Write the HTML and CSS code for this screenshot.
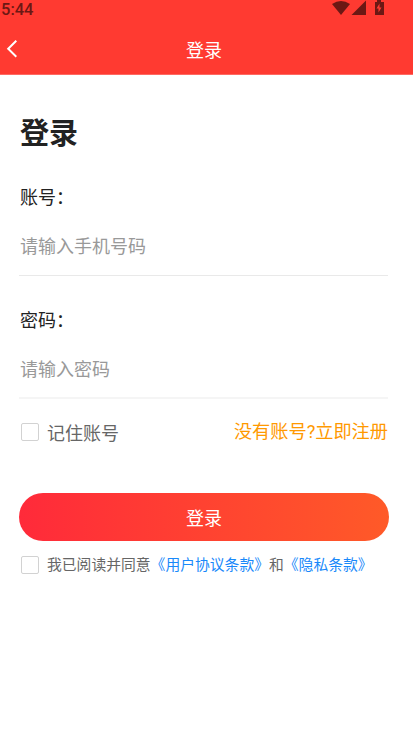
FILE: index.html
```
<!DOCTYPE html>
<html lang="zh-CN">
<head>
<meta charset="utf-8">
<title>登录</title>
<link rel="stylesheet" href="styles.css">
</head>
<body>
<header class="top">
  <div class="status">
    <span class="time">5:44</span>
    <svg class="signals" width="54" height="16" viewBox="0 0 54 16" fill="#6c1814">
      <path d="M0 4Q9-2 18 4L9 15Z"/>
      <path d="M19.5 15L34 .5V15Z"/>
      <path fill-rule="evenodd" d="M45 0h4v2h3v13h-9V2h2zM47.500 3.500l-3 5h2v4l3-5h-2z"/>
    </svg>
  </div>
  <nav class="nav">
    <svg class="back" width="12" height="18" viewBox="0 0 12 18" fill="none" stroke="#fff" stroke-width="2"><path d="M10.300 .7L2.200 8.700L10.300 16.700"/></svg>
    <h1 class="nav-title">登录</h1>
  </nav>
</header>
<main class="page">
  <h2 class="heading">登录</h2>
  <label class="label" for="account">账号：</label>
  <input class="field" id="account" type="text" placeholder="请输入手机号码">
  <label class="label" for="password">密码：</label>
  <input class="field password" id="password" type="password" placeholder="请输入密码">
  <div class="options">
    <label class="check"><input class="box" type="checkbox"><span class="check-text">记住账号</span></label>
    <a class="register">没有账号?立即注册</a>
  </div>
  <button class="submit" type="button">登录</button>
  <label class="check terms"><input class="box" type="checkbox"><span>我已阅读并同意<a class="link">《用户协议条款》</a>和<a class="link">《隐私条款》</a></span></label>
</main>
</body>
</html>
```
FILE: styles.css
```
* { box-sizing: border-box; }
body { margin: 0; background: #fff; color: #222; font-family: Roboto, "Noto Sans CJK SC", sans-serif; font-size: 18px; }
.top { height: 75px; background: #ff3a31; border-bottom: 1px solid #ff6962; }
.status { display: flex; justify-content: space-between; height: 24px; padding: 0 27px 0 1px; }
.time { color: #6c1814; font-size: 16.5px; font-weight: 500; line-height: 19px; }
.signals { display: block; }
.nav { display: grid; grid-template-columns: 40px 1fr 40px; align-items: center; height: 50px; padding-right: 5px; }
.back { margin-left: 6px; }
.nav-title { margin: 0; padding-top: 3px; color: #fff; font-size: 18px; font-weight: 400; line-height: 26px; text-align: center; }
.page { padding: 38px 24px 0 19px; }
.heading { margin: 0 0 0 1px; font-size: 29px; font-weight: 700; line-height: 42px; }
.label { display: block; margin: 30px 0 0 1px; line-height: 26px; }
.field { display: block; width: calc(100% - 1px); height: 65px; padding: 6px 1px 0; border: 0; border-bottom: 1px solid #e9e9e9; outline: 0; font: inherit; background: none; }
.field + .label { margin-top: 32px; }
.field::placeholder { color: #999; opacity: 1; }
.password { padding-top: 8px; border-bottom: 2px solid #f5f5f5; }
.options { display: flex; justify-content: space-between; height: 68px; padding-right: 1px; }
.check { display: flex; align-items: center; gap: 8px; height: 26px; margin: 20px 0 0 2px; color: #666; line-height: 26px; }
.check-text { padding-top: 3px; }
.box { appearance: none; width: 18px; height: 18px; margin: 0; border: 1px solid #d2d2d2; border-radius: 2px; background: #fff; }
.register { margin-top: 20px; color: #ff9900; font-size: 18.2px; line-height: 26px; }
.submit { display: block; width: 100%; height: 48px; margin-top: 26px; padding: 0; border: 0; border-radius: 24px; background: linear-gradient(90deg, #ff2a3a, #ff5a28); color: #fff; font: inherit; }
.terms { margin-top: 11px; font-size: 14.8px; white-space: nowrap; }
.link { color: #1989fa; }
```
